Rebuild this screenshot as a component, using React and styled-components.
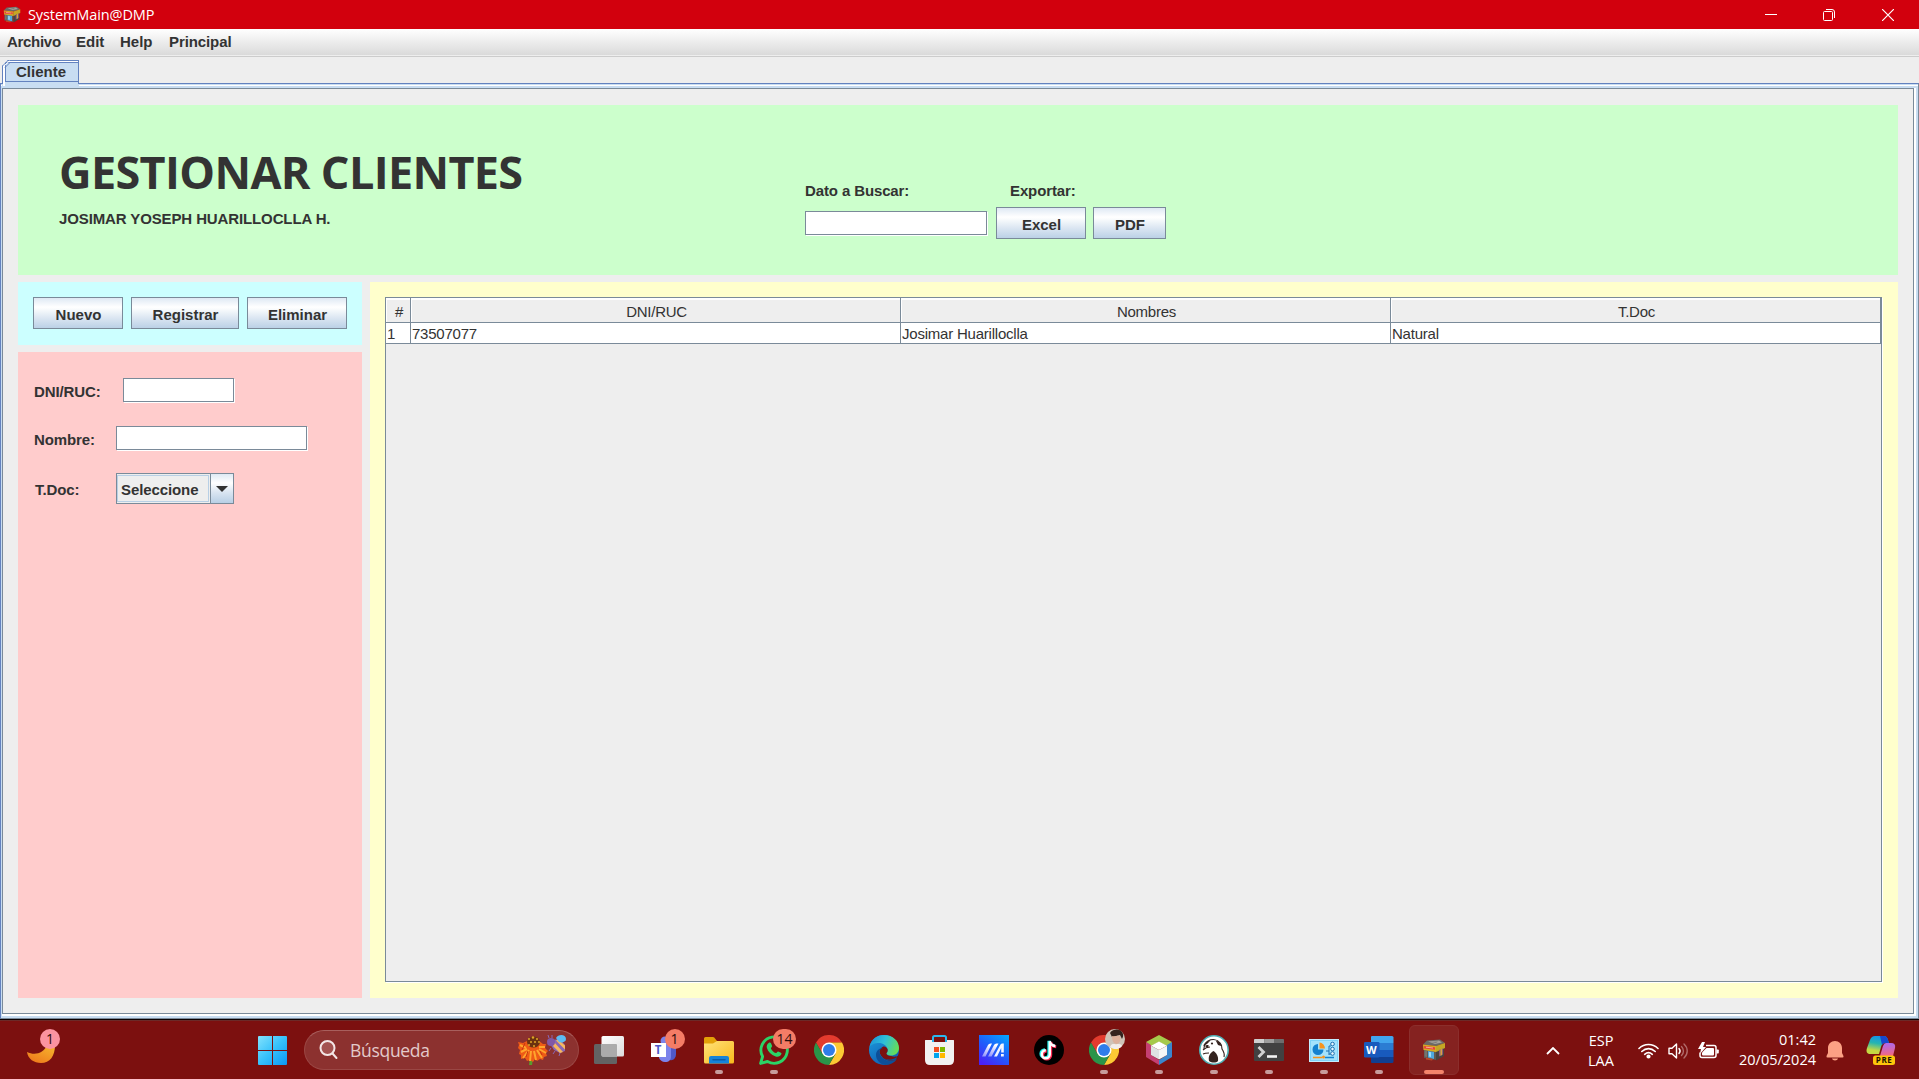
import React from 'react';
import styled, { createGlobalStyle, css } from 'styled-components';

const Global = createGlobalStyle`
  * { box-sizing: border-box; }
  html, body { margin: 0; padding: 0; }
  body { width: 1919px; height: 1079px; overflow: hidden; background: #eeeeee; }
  svg { display: block; flex: none; }
`;

const swing = css`
  font-family: "Liberation Sans", Arial, sans-serif;
  font-size: 15px;
  line-height: 18px;
  color: #333333;
  white-space: nowrap;
`;
const segoe = css`
  font-family: "Open Sans", "Noto Sans", sans-serif;
  white-space: nowrap;
`;

const Screen = styled.div`
  width: 1919px;
  height: 1079px;
  display: flex;
  flex-direction: column;
  background: #eeeeee;
`;

/* ---- window chrome ---- */
const TitleBar = styled.header`
  ${segoe}
  height: 29px;
  flex: none;
  display: flex;
  align-items: center;
  padding: 0 2px 0 3px;
  background: #d2000d;
  color: #fff;
`;
const WindowTitle = styled.span`
  margin-left: 7px;
  font-size: 14.5px;
  line-height: 20px;
  letter-spacing: -0.1px;
`;
const WindowControls = styled.div`
  display: flex;
  margin-left: auto;
`;
const ControlButton = styled.div`
  width: 58.5px;
  height: 29px;
  display: flex;
  align-items: center;
  justify-content: center;
`;
const MenuBar = styled.nav`
  height: 28px;
  flex: none;
  display: flex;
  gap: 17px;
  padding: 4px 0 0 7px;
  background: linear-gradient(#ffffff, #dadada 26px, #eeeeee 26px, #eeeeee 27px, #cccccc 27px);
`;
const MenuItem = styled.span`
  ${swing}
  font-weight: bold;
  width: ${(p) => p.$w}px;
  letter-spacing: ${(p) => p.$track || 0}px;
`;
const TabStrip = styled.div`
  height: 26px;
  flex: none;
  padding: 3px 0 0 2px;
`;
const Tab = styled.div`
  position: relative;
  z-index: 1;
  width: 77px;
  height: 26px;
  padding: 1px 0 0 1px;
  border: solid #6382bf;
  border-width: 1px 1px 0 1px;
  background: linear-gradient(90deg, #ffffff 2px, #c8ddf2 2px);
  border-image: linear-gradient(#6382bf 23px, #c8ddf2 23px) 1;
`;
const TabLabel = styled.div`
  ${swing}
  font-weight: bold;
  width: 73px;
  height: 20px;
  margin-left: 1px;
  padding: 0 0 0 10px;
  border: 1px solid #6382bf;
  border-right: 0;
  background: #c8ddf2;
  box-shadow: 0 -1px #fff;
`;
const TabCorner = styled.svg`
  position: absolute;
  left: -1px;
  top: -1px;
`;
const Frame = styled.main`
  height: 936px;
  flex: none;
  padding: 4px 2px 2px 1px;
  border: 1px solid #7a8a99;
  border-top-color: #6382bf;
  border-left-color: #6382bf;
  background: linear-gradient(#c8ddf2 1px, #ffffff 1px, #ffffff 2px, #c8ddf2 2px);
`;
const FrameEdge = styled.div`
  height: 100%;
  border: solid #ffffff;
  border-width: 0 2px 2px 0;
`;
const Content = styled.div`
  height: 100%;
  display: flex;
  flex-direction: column;
  gap: 7px;
  padding: 16px 15px 15px;
  border: 1px solid #7a8a99;
  background: #eeeeee;
`;

/* ---- swing widgets ---- */
const Button = styled.div`
  ${swing}
  font-weight: bold;
  width: ${(p) => p.$w}px;
  height: 32px;
  padding: 8px 0 0 1px;
  text-align: center;
  border: 1px solid #7a8a99;
  background: linear-gradient(#dfe9f4 0, #ffffff 9px, #fdfefe 10px, #dbe6f2 20px, #b8cfe5 31px);
`;
const Field = styled.div`
  width: ${(p) => p.$w}px;
  height: 24px;
  background: #fff;
  border: 1px solid #7a8a99;
  box-shadow: 1px 1px #fff;
`;
const Label = styled.span`
  ${swing}
  font-weight: bold;
  letter-spacing: -0.12px;
  width: ${(p) => (p.$w ? p.$w + 'px' : 'auto')};
`;
const ComboBox = styled.div`
  width: 118px;
  height: 31px;
  display: flex;
  border: 1px solid #7a8a99;
  background: #eeeeee;
`;
const ComboValue = styled.div`
  ${swing}
  font-weight: bold;
  letter-spacing: -0.1px;
  width: 92px;
  margin: 1px 1px 1px 0;
  padding: 5px 0 0 3px;
  border: 1px solid #b8cfe5;
`;
const ComboArrow = styled.div`
  flex: 1;
  display: flex;
  align-items: center;
  padding-left: 5px;
  border-left: 1px solid #7a8a99;
  background: linear-gradient(#dfe9f4 0, #ffffff 9px, #dbe6f2 18px, #b8cfe5 29px);
`;

/* ---- panels ---- */
const Banner = styled.section`
  height: 170px;
  flex: none;
  display: flex;
  padding-left: 41px;
  background: #ccffcc;
`;
const Heading = styled.div`
  width: 746px;
  padding-top: 35px;
`;
const H1 = styled.h1`
  ${segoe}
  margin: 0;
  font-size: 45px;
  line-height: 64px;
  font-weight: 700;
  letter-spacing: -0.65px;
  color: #333333;
`;
const Author = styled(Label)`
  display: block;
  margin-top: 6px;
`;
const Tools = styled.div`
  padding-top: 77px;
`;
const ToolLabels = styled.div`
  display: flex;
  height: 25px;
`;
const ToolRow = styled.div`
  display: flex;
`;
const SearchField = styled(Field)`
  margin: 4px 9px 0 0;
`;
const PdfButton = styled(Button)`
  margin-left: 7px;
`;
const Columns = styled.div`
  flex: 1;
  display: flex;
  gap: 8px;
`;
const Side = styled.aside`
  width: 344px;
  display: flex;
  flex-direction: column;
  gap: 7px;
`;
const Actions = styled.section`
  height: 63px;
  display: flex;
  gap: 8px;
  padding: 15px;
  background: #ccffff;
`;
const Form = styled.section`
  flex: 1;
  padding: 26px 0 0 16px;
  background: #ffcccc;
`;
const FormRow = styled.div`
  display: flex;
  height: ${(p) => p.$h}px;
`;
const FormLabel = styled(Label)`
  padding: ${(p) => p.$top}px 0 0 ${(p) => p.$left || 0}px;
`;
const TablePanel = styled.section`
  flex: 1;
  padding: 15px 16px 16px 15px;
  background: #ffffcc;
`;
const TableBox = styled.div`
  height: 685px;
  border: 1px solid #7a8a99;
  box-shadow: 1px 1px #ffffff;
  background: #eeeeee;
`;
const TableRow = styled.div`
  display: grid;
  grid-template-columns: 25px 490px 490px 490px;
  height: ${(p) => (p.$head ? 25 : 20)}px;
`;
const HeadCell = styled.div`
  ${swing}
  letter-spacing: -0.25px;
  text-align: center;
  padding: 5px 0 0 2px;
  border: solid #7a8a99;
  border-width: 0 1px 1px 0;
  box-shadow: inset 1px 2px #ffffff;
`;
const Cell = styled.div`
  ${swing}
  letter-spacing: -0.22px;
  padding: 2px 0 0 1px;
  background: #fff;
  border: solid #7a8a99;
  border-width: 0 1px 1px 0;
`;

/* ---- taskbar ---- */
const Taskbar = styled.footer`
  ${segoe}
  height: 60px;
  flex: none;
  display: flex;
  align-items: center;
  color: #fff;
  background: linear-gradient(#0b0000 1px, #6b2a28 1px, #6b2a28 2px, #7c100f 2px);
`;
const Widget = styled.div`
  position: relative;
  width: 258px;
  height: 60px;
  padding: 26px 0 0 27px;
`;
const Badge = styled.span`
  position: absolute;
  left: ${(p) => p.$x}px;
  top: ${(p) => p.$y}px;
  width: ${(p) => p.$w || 20}px;
  height: 20px;
  border-radius: 12px;
  background: ${(p) => p.$bg || '#f47c66'};
  color: #2a0b0b;
  font-size: 14px;
  line-height: 20px;
  text-align: center;
`;
const StartSlot = styled.div`
  width: 29px;
  padding-top: 3px;
`;
const SearchBox = styled.div`
  width: 275px;
  height: 40px;
  margin: 2px 2.5px 0 17px;
  display: flex;
  align-items: center;
  padding-left: 14px;
  border-radius: 20px;
  border: 1px solid #9a4744;
  border-top-color: #a85f5d;
  background: #8c312f;
`;
const SearchText = styled.span`
  width: 168px;
  margin-left: 12px;
  font-size: 17.5px;
  line-height: 24px;
  letter-spacing: -0.3px;
  color: #e3caca;
`;
const Slot = styled.div`
  position: relative;
  width: 55px;
  height: 60px;
  display: flex;
  align-items: center;
  justify-content: center;
  padding-top: 2px;
`;
const Active = styled.div`
  width: 50px;
  height: 50px;
  display: flex;
  align-items: center;
  justify-content: center;
  border: 1px solid #8b2e2c;
  border-radius: 6px;
  background: #852220;
`;
const Running = styled.i`
  position: absolute;
  bottom: 5px;
  left: 50%;
  width: ${(p) => (p.$on ? 20 : 8)}px;
  height: 4px;
  margin-left: ${(p) => (p.$on ? -10 : -4)}px;
  border-radius: 2px;
  background: ${(p) => (p.$on ? '#f4846b' : '#c79b9b')};
`;
const Tray = styled.div`
  flex: 1;
  height: 60px;
  display: flex;
  align-items: center;
  justify-content: flex-end;
  padding-right: 11px;
`;
const TrayItem = styled.div`
  width: ${(p) => p.$w}px;
  display: flex;
  justify-content: center;
  padding-top: 3px;
`;
const TrayText = styled.div`
  width: ${(p) => p.$w}px;
  margin-left: ${(p) => p.$left || 0}px;
  padding-top: ${(p) => p.$top || 0}px;
  font-size: 14.5px;
  line-height: 20px;
  text-align: ${(p) => p.$align || 'center'};
`;

/* ---- drawings ---- */
const ShopIcon = ({ w = 24, h = 22 }) => (
  <svg width={w} height={h} viewBox="0 0 24 22">
    <path d="M2 8 14 10 14 21 2 19Z" fill="#5f5a55" />
    <path d="M14 10 22 7 22 17 14 21.500Z" fill="#4a4440" />
    <path d="M5 1.500 18 .5 23 4 14 7 1 5.500Z" fill="#6b6966" />
    <path d="M6 2.500 17 1.500 20 3.500 13 5Z" fill="#a5a29b" />
    <path d="M9 3 16 2.400 14 4Z" fill="#7d7b77" />
    <path d="M1 5.500 14 7 14 13 1.500 11Z" fill="#d7ab22" />
    <path d="M14 7 23 4 23 9 14 13Z" fill="#c4a624" />
    <path d="M2 7 13 8.300 13 10.800 2 9.500Z" fill="#e8443a" />
    <path d="M4 8.200 11 9" stroke="#ffc3a8" strokeWidth=".8" />
    <path d="M6 12 12 13 12 20 6 18.500Z" fill="#4fa9de" />
    <path d="M7 13 9 13.300 9 18 7 17.500Z" fill="#a3dcf5" />
    <path d="M2.500 11.500 5 12 5 18 2.500 17.500Z" fill="#77736c" />
    <path d="M17 11 21 9.500 21 15.500 17 17.500Z" fill="#8d5f7c" />
    <path d="M18.500 10.500 20 10 20 16 18.500 16.800Z" fill="#d8a43d" />
    <path d="M4 18.500 11 20 10 21.500 4 20.500Z" fill="#b84a2a" />
  </svg>
);
const MoonIcon = () => (
  <svg width="29" height="19" viewBox="0 0 29 19">
    <defs>
      <linearGradient id="moon" x1="1" y1="0" x2="0.3" y2="1">
        <stop offset="0" stopColor="#f6b92f" />
        <stop offset="1" stopColor="#ee7b1c" />
      </linearGradient>
    </defs>
    <path d="M0 7c8 4 17 1 20-7h8c0 11-5 18-14 18C7 18 1 14 0 7Z" fill="url(#moon)" />
  </svg>
);
const StartIcon = () => (
  <svg width="29" height="29" viewBox="0 0 29 29">
    <defs>
      <linearGradient id="win" x1="0" y1="0" x2="1" y2="1">
        <stop offset="0" stopColor="#83e2fc" />
        <stop offset="0.5" stopColor="#36c1fb" />
        <stop offset="1" stopColor="#0a97f4" />
      </linearGradient>
    </defs>
    <path d="M1 0h13v14H0V1a1 1 0 0 1 1-1ZM15 0h13a1 1 0 0 1 1 1v13H15ZM0 15h14v14H1a1 1 0 0 1-1-1ZM15 15h14v13a1 1 0 0 1-1 1H15Z" fill="url(#win)" />
  </svg>
);
const MagnifierIcon = () => (
  <svg width="19" height="20" viewBox="0 0 19 20" fill="none" stroke="#f3e6e6" strokeWidth="2" strokeLinecap="round">
    <circle cx="8.500" cy="8" r="7" fill="#a35250" />
    <path d="m13.500 13.500 4 4.500" />
  </svg>
);
const FlowerBeeIcon = () => (
  <svg width="50" height="32" viewBox="0 0 50 32">
    <path d="M12 24 11 31h3l1-6Z" fill="#5a9b2c" />
    <path d="M0 8 5 9 9 7 21 7 25 10 28 10 27 14 30 17 28 19 29 22 26 23 25 26 22 25 19 27 17 25 15 28 12 26 9 27 7 24 3 25 3 21 1 20 2 16 0 14 1 11Z" fill="#ee5a16" />
    <path d="M2 11 8 14ZM3 18 9 15ZM5 24 11 16ZM12 27 13 17ZM18 26 16 17ZM24 24 19 16ZM28 19 21 15ZM27 13 21 13Z" stroke="#ffa52c" strokeWidth="2" />
    <path d="M7 9 4 16M10 17 8 23M22 17 24 21" stroke="#c9350f" />
    <ellipse cx="15.500" cy="8" rx="6.500" ry="5.500" fill="#6b3210" />
    <g fill="#e0a526">
      <circle cx="11" cy="5" r="1" /><circle cx="15" cy="3.500" r="1.200" /><circle cx="19" cy="5" r="1" /><circle cx="21" cy="8" r=".9" />
      <circle cx="13" cy="8" r="1" /><circle cx="17" cy="8" r="1" /><circle cx="11" cy="11" r="1" /><circle cx="16" cy="12" r="1" />
    </g>
    <path d="M34 6 42 5 47 11 47 17 42 19 36 16 32 10Z" fill="#8a68b4" />
    <path d="m36 8 9 10-3 1-7-7ZM40 5.500l7 6v4l-9-9Z" fill="#f7b75e" />
    <path d="M38 4c2-4 10-4 10 1 0 3-4 4-7 3Z" fill="#5dbcf4" />
    <circle cx="33" cy="8" r="4" fill="#8059a6" />
    <path d="m31 4-1-3M34 4V1M33 14l-2 3M37 17l-2 3M42 19l-1 3" stroke="#8a68b4" />
  </svg>
);
const TaskViewIcon = () => (
  <svg width="30" height="28" viewBox="0 0 30 28">
    <defs>
      <linearGradient id="tv" x1="0" y1="0" x2="1" y2="1"><stop stopColor="#fff" /><stop offset="1" stopColor="#dcdcdc" /></linearGradient>
    </defs>
    <rect x="0" y="8" width="23" height="20" rx="1.500" fill="#636363" />
    <rect x="7.500" y="0" width="22.500" height="20.500" rx="1.500" fill="url(#tv)" />
    <path d="M7.500 8H22q1 0 1 1v11.500H9q-1.500 0-1.500-1.500Z" fill="#ababab" />
  </svg>
);
const IconText = styled.text`
  font-family: "Open Sans", sans-serif;
  font-weight: 700;
  font-size: ${(p) => p.$s}px;
`;
const TeamsIcon = () => (
  <svg width="28" height="28" viewBox="0 0 28 28">
    <circle cx="15" cy="5" r="4.500" fill="#7b83eb" />
    <path d="M18 10h8v8c0 4-3 7-6 6Z" fill="#5059c9" />
    <path d="M9 9h12v11c0 4-2 6-6 6-3 0-5-2-6-4Z" fill="#7b83eb" />
    <rect x="1" y="7" width="15" height="14" fill="#fff" />
    <IconText x="4.700" y="18" $s={11.5} fill="#5059c9">T</IconText>
  </svg>
);
const ExplorerIcon = () => (
  <svg width="30" height="27" viewBox="0 0 30 27">
    <defs>
      <linearGradient id="ex" x1="0" y1="0" x2="1" y2="1"><stop stopColor="#ffe27a" /><stop offset="1" stopColor="#f8b91c" /></linearGradient>
    </defs>
    <path d="M0 1.500Q0 0 1.500 0H9q1.500 0 2 1.500L13 4v3H0Z" fill="#e3a008" />
    <path d="M0 6.500h9L13 4h15.500Q30 4 30 5.500V25q0 1.500-1.500 1.500h-27Q0 26.500 0 25Z" fill="url(#ex)" />
    <path d="M5 26.500V21q0-2 2-2h16q2 0 2 2v5.500Z" fill="#1683d8" />
    <path d="M9 22.700h12" stroke="#0a5ca8" strokeWidth="1.500" strokeLinecap="round" />
  </svg>
);
const WhatsAppIcon = () => (
  <svg width="30" height="30" viewBox="0 0 30 30">
    <path d="M1.600 28.400 3.600 21.500A13.200 13.200 0 1 1 8.500 26.500Z" fill="none" stroke="#2bd366" strokeWidth="2.900" strokeLinejoin="round" />
    <path d="M10 7.700c.8-.6 1.700-.3 2 .5l1.100 2.700c.2.600-1.300 2-1.200 2.500 1 2.200 2.700 3.800 5 4.700.6.200 1.600-1.900 2.300-1.600l2.700 1.300c.6.300.7.700.4 1.500-.8 2.200-3.300 3-5.700 2.200-4.500-1.600-7.500-4.700-8.700-8.500-.6-2 .3-4.300 2.100-5.300Z" fill="#2bd366" />
  </svg>
);
const ChromeIcon = () => (
  <svg width="30" height="30" viewBox="0 0 30 30">
    <path d="M2 7.500A15 15 0 0 1 28 7.500H15L8.500 18.700Z" fill="#e33b2e" />
    <path d="M28 7.500A15 15 0 0 1 15 30L21.500 18.700 15 7.500Z" fill="#fcc934" />
    <path d="M2 7.500 8.500 18.700H21.500L15 30A15 15 0 0 1 2 7.500Z" fill="#2a9449" />
    <circle cx="15" cy="15" r="7.500" fill="#fff" />
    <circle cx="15" cy="15" r="6" fill="#2f7de9" />
  </svg>
);
const EdgeIcon = () => (
  <svg width="30" height="30" viewBox="0 0 30 30">
    <defs>
      <linearGradient id="eg" x1="0" y1="0.200" x2="1" y2="0.500"><stop stopColor="#1c93d8" /><stop offset="0.500" stopColor="#2fc0d8" /><stop offset="1" stopColor="#66dd58" /></linearGradient>
      <linearGradient id="eb" x1="0" y1="0" x2="0.600" y2="1"><stop stopColor="#1d9ddd" /><stop offset="1" stopColor="#0f5db2" /></linearGradient>
    </defs>
    <circle cx="15" cy="15" r="15" fill="url(#eb)" />
    <path d="M0.500 12C2 4 8 0 15 0c9 0 15 6 15 13 0 5-4 7.500-8 7.500-3 0-5-1-4.500-2.500 1-1 1.500-2.500 1-4C17.500 10.500 14 8 10 8 6 8 2 9.500.500 12Z" fill="url(#eg)" />
    <path d="M17.500 18c1-1 1.500-2.500 1-4-1-2-3-3-5-2-2 1-3 3-3 5 1 5 6 9 12 9 2.500 0 4.500-1 6-3l1.500-2.500C27 22 25 22 22 21c-3 0-5-1.500-4.500-3Z" fill="#7c100f" />
    <path d="M10.500 16c0 6 5 10 11 10 2.500 0 5-1 6.500-2-3 4-7 6-12 6-5-1-9-5-9-10 0-4 3-7 7-7-2 1-3.500 1.500-3.500 3Z" fill="#0d4f98" />
    <path d="M12 20c2 4 6 5 10 4.500 2.500-.5 4.500-1.500 6-2.500l-1 2.500c-5 2.500-12 1-15-4.500Z" fill="#0d4f98" />
  </svg>
);
const StoreIcon = () => (
  <svg width="29" height="30" viewBox="0 0 29 30">
    <path d="M8 7V2.500Q8 1 9.500 1h10Q21 1 21 2.500V7" fill="none" stroke="#2ab7ee" strokeWidth="2" />
    <path d="M0 5.500Q0 5 .5 5H8v2H21V5h7.500q.5 0 .5.500V25q0 5-5 5H5q-5 0-5-5Z" fill="#f2f2f2" />
    <path d="M9 12h5v5H9Z" fill="#f25022" /><path d="M15 12h5v5h-5Z" fill="#7fba00" />
    <path d="M9 18h5v5H9Z" fill="#00a4ef" /><path d="M15 18h5v5h-5Z" fill="#ffb900" />
    <path d="M8 7V5M21 7V5" stroke="#2ab7ee" strokeWidth="2" />
  </svg>
);
const AsusIcon = () => (
  <svg width="30" height="30" viewBox="0 0 30 30">
    <defs>
      <linearGradient id="as" x1="0.200" y1="1" x2="0.900" y2="0"><stop stopColor="#4b21f5" /><stop offset="0.500" stopColor="#1e60fb" /><stop offset="1" stopColor="#05a4ff" /></linearGradient>
      <linearGradient id="ab" x1="0" y1="1" x2="0.300" y2="0"><stop stopColor="#8b8dfc" /><stop offset="1" stopColor="#fff" /></linearGradient>
    </defs>
    <rect width="30" height="30" fill="url(#as)" />
    <path d="M3 21.500 9 10q.8-1.500 2.500-1.500H13L6.500 21.500Z" fill="url(#ab)" />
    <path d="M9 21.500 15 10q.8-1.500 2.500-1.500H19.500L12.500 21.500Z" fill="url(#ab)" />
    <path d="m15 21.500 6.500-12q.6-1 2-1h1.300v9h-2.600v-4.500L18 21.500Z" fill="#f2f6ff" />
    <rect x="22" y="19" width="2.800" height="2.500" fill="#f2f6ff" />
  </svg>
);
const TikTokIcon = () => (
  <svg width="30" height="30" viewBox="0 0 30 30" fill="none" strokeWidth="3">
    <circle cx="15" cy="15" r="15" fill="#000" />
    <path d="M15.500 6v13a4 4 0 1 1-4-4M15.500 6c.5 3 2.500 4.500 5.500 4.700" stroke="#25f4ee" transform="translate(-.6 -.3)" />
    <path d="M15.500 6v13a4 4 0 1 1-4-4M15.500 6c.5 3 2.500 4.500 5.500 4.700" stroke="#fe2c55" transform="translate(1.200 1)" />
    <path d="M15.500 6v13a4 4 0 1 1-4-4M15.500 6c.5 3 2.500 4.500 5.500 4.700" stroke="#fff" strokeWidth="2.400" transform="translate(.3 .3)" />
  </svg>
);
const Avatar = styled.svg`
  position: absolute;
  left: 28px;
  top: 10px;
`;
const AvatarDrawing = () => (
  <Avatar width="20" height="20" viewBox="0 0 20 20">
    <circle cx="10" cy="10" r="10" fill="#cfc4b8" />
    <path d="M5 4c2-4 9-5 12-1 2 3 1 5 0 7l-2-4-8 2Z" fill="#33221d" />
    <path d="M7 7c3 1 6-1 8 0 1 4 0 7-3 8-4 0-5-4-5-8Z" fill="#dcb09b" />
    <path d="M5 18c2-5 5-2 7-3 3 0 4 0 5 2-3 4-8 4-12 1Z" fill="#f3eeea" />
  </Avatar>
);
const NetBeansIcon = () => (
  <svg width="26" height="30" viewBox="0 0 26 30">
    <path d="M13 0 26 7 21 11 13 7 5 11 0 7Z" fill="#a6c94b" />
    <path d="M0 7 5 10v10l8 5v5L0 22Z" fill="#c43f72" />
    <path d="M26 7 21 10v10l-8 5v5l13-8Z" fill="#3b86cc" />
    <path d="m13 6.500 8 4.300L13 15 5 10.800Z" fill="#fff" />
    <path d="M5 10.800 13 15v9.500L5 20Z" fill="#dfe3e3" />
    <path d="M21 10.800 13 15v9.500l8-4.500Z" fill="#f4f6f6" />
  </svg>
);
const DBeaverIcon = () => (
  <svg width="30" height="30" viewBox="0 0 30 30">
    <circle cx="15" cy="15" r="14.200" fill="#fff" stroke="#4fb0b5" strokeWidth="1.600" />
    <path d="M10 26c-1-5 1-8 4.500-10 3 2 5 5 4.500 10-2 2-6 2-9 0Z" fill="#34231f" />
    <path d="M5 14c0-3 1-6 4-8 4-2 9-2 12 2 2 2 2 4 2 6 2 3 3 5 2 8" fill="none" stroke="#34231f" strokeWidth="1.200" />
    <path d="M4 11c1-3 4-5 7-5l-3 3ZM17 6c3 0 5 2 5 5l-3-1Z" fill="#34231f" />
    <path d="M4 15c2-2 4-3 7-3M4 19c2-1 4-1 6-1" stroke="#34231f" strokeWidth="1.100" fill="none" />
    <circle cx="13" cy="8.500" r="1.100" fill="#34231f" />
    <path d="M6 11c1-1.500 3.500-1.500 4 0l-2 1.800Z" fill="#34231f" />
  </svg>
);
const TerminalIcon = () => (
  <svg width="30" height="22" viewBox="0 0 30 22">
    <rect width="30" height="22" rx="1" fill="#414141" />
    <path d="M1 0h9.500v4H0V1q0-1 1-1Z" fill="#cfcfcf" /><path d="M10.500 0H20v4h-9.500Z" fill="#9d9d9d" /><path d="M20 0h9q1 0 1 1v3H20Z" fill="#6d6d6d" />
    <path d="m4.500 8 5 5-5 5" fill="none" stroke="#d0d0d0" strokeWidth="2.800" />
    <path d="M13 17.500h10" stroke="#f3f3f3" strokeWidth="2.600" />
  </svg>
);
const ControlPanelIcon = () => (
  <svg width="30" height="23" viewBox="0 0 30 23">
    <rect x="0.500" y="0.500" width="29" height="22" fill="#7fd3f8" stroke="#c4edff" />
    <rect x="2" y="2" width="26" height="19" fill="#a3e2fc" />
    <path d="M9 5A5.500 5.500 0 1 0 14.500 10.500H9Z" fill="#1481cf" />
    <path d="M10.500 3.500A6 6 0 0 1 16 9.500H10.500Z" fill="#f7941d" />
    <path d="M17 12h3M20 7v9M20 7h2M20 15h2" stroke="#1b6eb0" fill="none" />
    <g fill="#e9f8ff" stroke="#1b6eb0"><circle cx="23.500" cy="5" r="1.800" /><circle cx="23.500" cy="10" r="1.800" /><circle cx="23.500" cy="14.500" r="1.800" /></g>
    <path d="M4 18.500h9" stroke="#f7941d" strokeWidth="1.500" /><path d="M16 18.500h9" stroke="#1481cf" strokeWidth="1.500" />
    <circle cx="14.500" cy="18" r="1.500" fill="#f7941d" />
  </svg>
);
const WordIcon = () => (
  <svg width="30" height="28" viewBox="0 0 30 28">
    <path d="M8 0h20q1.500 0 1.500 1.500V7H7V1q0-1 1-1Z" fill="#41a5ee" />
    <path d="M7 7h22.500v7H7Z" fill="#2b7cd3" /><path d="M7 14h22.500v7H7Z" fill="#185abd" />
    <path d="M7 21h22.500v4.500q0 1.500-1.500 1.500H8q-1 0-1-1Z" fill="#103f91" />
    <rect x="0" y="6" width="15.500" height="15.500" rx="1.300" fill="#185abd" />
    <IconText x="2" y="17.700" $s={11} fill="#fff">W</IconText>
  </svg>
);
const WifiIcon = () => (
  <svg width="21" height="16" viewBox="0 0 21 16" fill="none" stroke="#fff" strokeWidth="1.600" strokeLinecap="round">
    <path d="M1 5.500C6.500.2 14.500.2 20 5.500M3.800 8.500c4-3.800 9.400-3.800 13.400 0M6.700 11.300c2.300-2 5.300-2 7.600 0" />
    <circle cx="10.500" cy="13.500" r="1.300" fill="#fff" />
  </svg>
);
const VolumeIcon = () => (
  <svg width="21" height="18" viewBox="0 0 21 18" fill="none" stroke="#fff" strokeWidth="1.400" strokeLinejoin="round" strokeLinecap="round">
    <path d="M1 6.300h3L8.500 2v14L4 11.700H1Z" />
    <path d="M11 6.500c1.300 1.500 1.300 3.500 0 5" />
    <path d="M13.500 4.500c2.600 2.600 2.600 6.400 0 9M16 2c4.300 4 4.300 10 0 14" stroke="#b06a69" />
  </svg>
);
const BatteryIcon = () => (
  <svg width="21" height="18" viewBox="0 0 21 18">
    <path d="M8 3.500h8q2 0 2 2v8q0 2-2 2H4q-2 0-2-2v-3" fill="none" stroke="#fff" strokeWidth="1.500" />
    <path d="M8.500 6H15q1 0 1 1v5.500q0 1-1 1H5q-1 0-1-1v-2Z" fill="#fff" />
    <path d="M18.500 7.500H20q.8 0 .8.800v2.400q0 .8-.8.800h-1.500Z" fill="#fff" />
    <path d="M4 0 0 7h3l-1 5 6-7H5l2-5Z" fill="#fff" />
  </svg>
);
const BellIcon = () => (
  <svg width="18" height="20" viewBox="0 0 18 20">
    <path d="M9 0c4 0 7 3 7 7v5l1.500 3q.3 1.500-1 1.500h-15q-1.300 0-1-1.500L2 12V7c0-4 3-7 7-7Z" fill="#fca184" />
    <path d="M6 17.500h6c-.5 2.500-5.500 2.500-6 0Z" fill="#fca184" />
  </svg>
);
const CopilotIcon = () => (
  <svg width="30" height="29" viewBox="0 0 30 29">
    <defs>
      <linearGradient id="c1" x1="0.500" y1="0" x2="0.300" y2="1"><stop stopColor="#1594e8" /><stop offset="0.400" stopColor="#25b5b1" /><stop offset="0.800" stopColor="#c5d843" /></linearGradient>
      <linearGradient id="c2" x1="0.500" y1="0" x2="0.600" y2="1"><stop stopColor="#ad69f0" /><stop offset="1" stopColor="#f4677c" /></linearGradient>
    </defs>
    <path d="M9 0h9q3 0 4 4l1 3h-4q-3 0-4 4l-2 7H5q-6 0-4-6L4 4Q5.500 0 9 0Z" fill="url(#c1)" />
    <path d="M14 0h4q3 0 4 4l1 3h-4q-2 0-3 2Z" fill="#1747cf" />
    <path d="M20 7h5q5 0 4 5l-2 8H14l3-10q1-3 3-3Z" fill="url(#c2)" />
    <rect x="7" y="19.500" width="22" height="9.500" rx="2.500" fill="#fdc60b" />
    <IconText x="9.800" y="27.200" $s={8} fill="#1b1300" letterSpacing="0.600">PRE</IconText>
  </svg>
);

const apps = [
  { icon: <TaskViewIcon /> },
  { icon: <TeamsIcon />, badge: '1' },
  { icon: <ExplorerIcon />, run: true },
  { icon: <WhatsAppIcon />, badge: '14', run: true },
  { icon: <ChromeIcon /> },
  { icon: <EdgeIcon /> },
  { icon: <StoreIcon /> },
  { icon: <AsusIcon /> },
  { icon: <TikTokIcon /> },
  { icon: <><ChromeIcon /><AvatarDrawing /></>, run: true },
  { icon: <NetBeansIcon />, run: true },
  { icon: <DBeaverIcon />, run: true },
  { icon: <TerminalIcon />, run: true },
  { icon: <ControlPanelIcon />, run: true },
  { icon: <WordIcon />, run: true },
];

export default function App() {
  return (
    <Screen>
      <Global />
      <TitleBar>
        <ShopIcon w={18} h={17} />
        <WindowTitle>SystemMain@DMP</WindowTitle>
        <WindowControls>
          <ControlButton>
            <svg width="12" height="12"><path d="M0 5.500h12" stroke="#fff" /></svg>
          </ControlButton>
          <ControlButton>
            <svg width="12" height="12" fill="none" stroke="#fff"><rect x=".5" y="2.500" width="9" height="9" rx="1" /><path d="M3 .5h6q2.500 0 2.500 2.500v6" /></svg>
          </ControlButton>
          <ControlButton>
            <svg width="12" height="12"><path d="m0 0 12 12M12 0 0 12" stroke="#fff" strokeWidth="1.200" /></svg>
          </ControlButton>
        </WindowControls>
      </TitleBar>
      <MenuBar>
        <MenuItem $w={52} $track={-0.3}>Archivo</MenuItem>
        <MenuItem $w={27}>Edit</MenuItem>
        <MenuItem $w={32}>Help</MenuItem>
        <MenuItem $track={-0.1}>Principal</MenuItem>
      </MenuBar>
      <TabStrip>
        <Tab>
          <TabLabel>Cliente</TabLabel>
          <TabCorner width="8" height="8" viewBox="0 0 8 8">
            <path d="M0 0h6L0 6Z" fill="#eee" />
            <path d="M0 6.500 6.500 0" stroke="#6382bf" />
            <path d="M1 7 7.500.8" stroke="#fff" />
            <path d="M3 7.500 7.500 3" stroke="#6382bf" />
          </TabCorner>
        </Tab>
      </TabStrip>
      <Frame>
        <FrameEdge>
          <Content>
            <Banner>
              <Heading>
                <H1>GESTIONAR CLIENTES</H1>
                <Author>JOSIMAR YOSEPH HUARILLOCLLA H.</Author>
              </Heading>
              <Tools>
                <ToolLabels>
                  <Label $w={205}>Dato a Buscar:</Label>
                  <Label>Exportar:</Label>
                </ToolLabels>
                <ToolRow>
                  <SearchField $w={182} />
                  <Button $w={90}>Excel</Button>
                  <PdfButton $w={73}>PDF</PdfButton>
                </ToolRow>
              </Tools>
            </Banner>
            <Columns>
              <Side>
                <Actions>
                  <Button $w={90}>Nuevo</Button>
                  <Button $w={108}>Registrar</Button>
                  <Button $w={100}>Eliminar</Button>
                </Actions>
                <Form>
                  <FormRow $h={48}>
                    <FormLabel $w={89} $top={5}>DNI/RUC:</FormLabel>
                    <Field $w={111} />
                  </FormRow>
                  <FormRow $h={47}>
                    <FormLabel $w={82} $top={5}>Nombre:</FormLabel>
                    <Field $w={191} />
                  </FormRow>
                  <FormRow $h={31}>
                    <FormLabel $w={82} $top={8} $left={1}>T.Doc:</FormLabel>
                    <ComboBox>
                      <ComboValue>Seleccione</ComboValue>
                      <ComboArrow>
                        <svg width="12" height="6"><path d="M0 0h12L6 6Z" fill="#333" /></svg>
                      </ComboArrow>
                    </ComboBox>
                  </FormRow>
                </Form>
              </Side>
              <TablePanel>
                <TableBox>
                  <TableRow $head>
                    <HeadCell>#</HeadCell>
                    <HeadCell>DNI/RUC</HeadCell>
                    <HeadCell>Nombres</HeadCell>
                    <HeadCell>T.Doc</HeadCell>
                  </TableRow>
                  <TableRow>
                    <Cell>1</Cell>
                    <Cell>73507077</Cell>
                    <Cell>Josimar Huarilloclla</Cell>
                    <Cell>Natural</Cell>
                  </TableRow>
                </TableBox>
              </TablePanel>
            </Columns>
          </Content>
        </FrameEdge>
      </Frame>
      <Taskbar>
        <Widget>
          <MoonIcon />
          <Badge $x={40} $y={10} $bg="#fb93a0">1</Badge>
        </Widget>
        <StartSlot><StartIcon /></StartSlot>
        <SearchBox>
          <MagnifierIcon />
          <SearchText>Búsqueda</SearchText>
          <FlowerBeeIcon />
        </SearchBox>
        {apps.map((a, i) => (
          <Slot key={i}>
            {a.icon}
            {a.badge && <Badge $x={a.badge.length > 1 ? 26.5 : 28} $y={10} $w={a.badge.length > 1 ? 23 : 20}>{a.badge}</Badge>}
            {a.run && <Running />}
          </Slot>
        ))}
        <Slot>
          <Active><ShopIcon /></Active>
          <Running $on />
        </Slot>
        <Tray>
          <TrayItem $w={14}>
            <svg width="14" height="8" fill="none" stroke="#fff" strokeWidth="1.800"><path d="m1 7 6-6 6 6" /></svg>
          </TrayItem>
          <TrayText $w={74} $left={4} $top={3}>ESP<br />LAA</TrayText>
          <TrayItem $w={20}><WifiIcon /></TrayItem>
          <TrayItem $w={40}><VolumeIcon /></TrayItem>
          <TrayItem $w={20}><BatteryIcon /></TrayItem>
          <TrayText $w={98} $align="right" $top={1}>01:42<br />20/05/2024</TrayText>
          <TrayItem $w={38}><BellIcon /></TrayItem>
          <TrayItem $w={54}><CopilotIcon /></TrayItem>
        </Tray>
      </Taskbar>
    </Screen>
  );
}
